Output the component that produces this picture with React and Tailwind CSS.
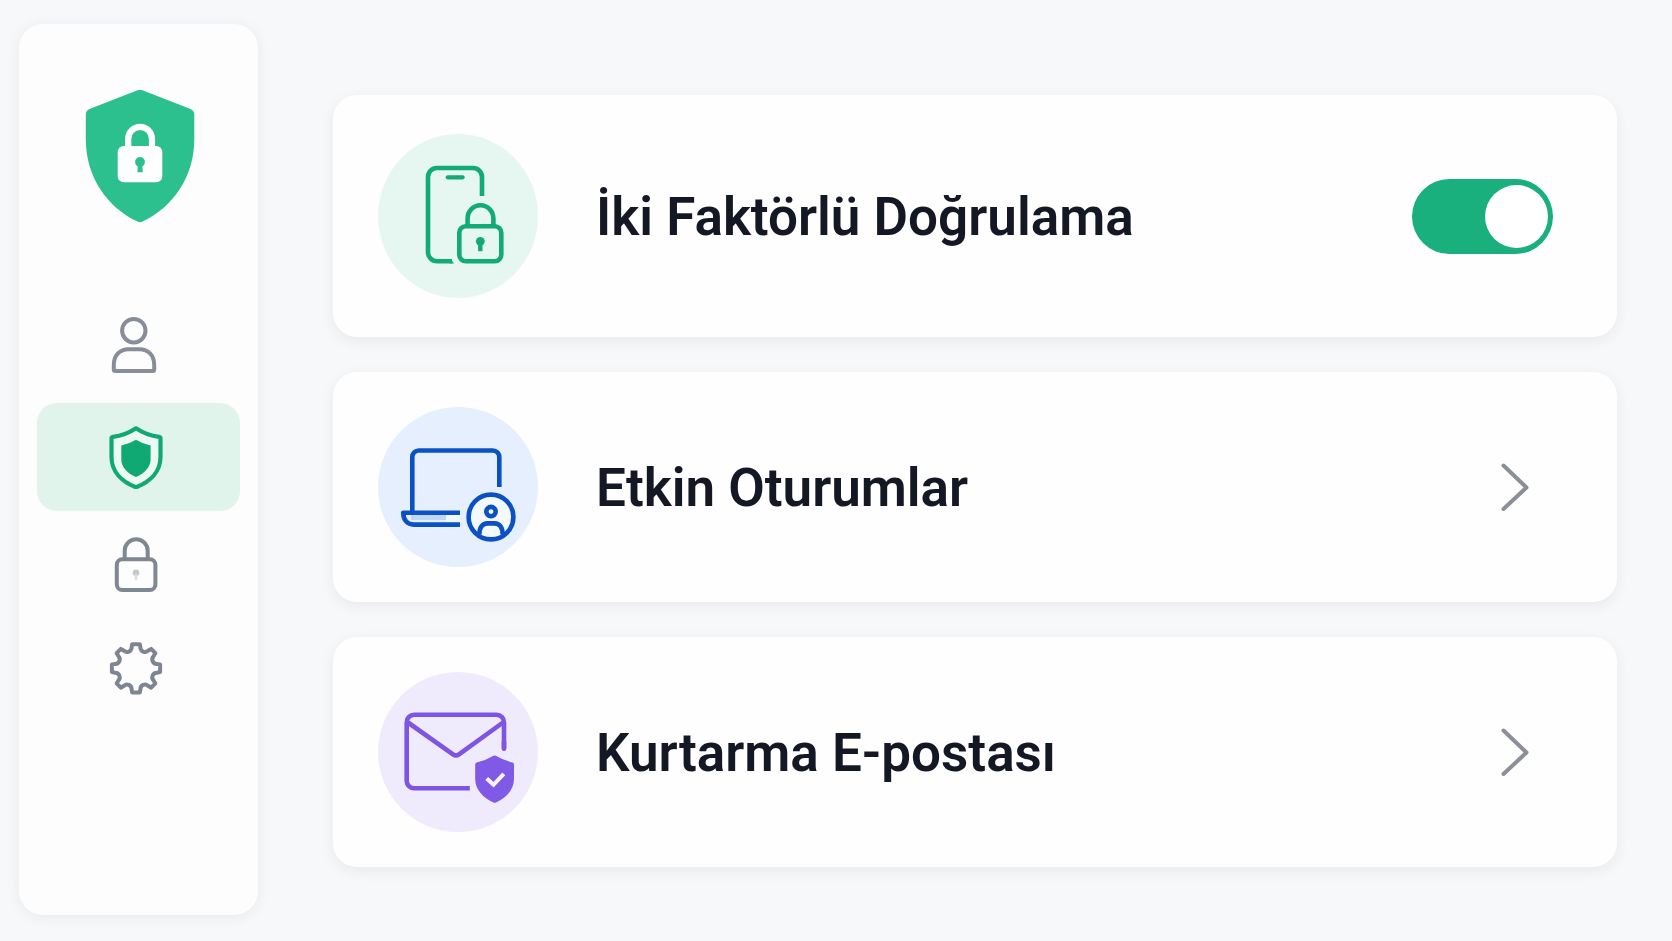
import React, { useState } from "react";

const polar = (radius, degrees) => {
  const a = ((degrees - 90) * Math.PI) / 180;
  return `${(30 + radius * Math.cos(a)).toFixed(2)} ${(31.3 + radius * Math.sin(a)).toFixed(2)}`;
};

// Eight teeth: the ones on the axes are wider than the ones on the diagonals.
const wideTooth = { tip: 9, base: 12, radius: 24.4, foot: 21.2 };
const slimTooth = { tip: 7, base: 10.5, radius: 24.6, foot: 21.2 };

const gearPath =
  Array.from({ length: 8 }, (_, i) => {
    const t = i * 45;
    const tooth = i % 2 ? slimTooth : wideTooth;
    const next = i % 2 ? wideTooth : slimTooth;
    return [
      i === 0 ? `M${polar(tooth.foot, t - tooth.base)}` : "",
      `L${polar(tooth.radius, t - tooth.tip)}`,
      `L${polar(tooth.radius, t + tooth.tip)}`,
      `L${polar(tooth.foot, t + tooth.base)}`,
      `C${polar(17.4, t + tooth.base + 3)} ${polar(17.4, t + 42 - next.base)} ${polar(next.foot, t + 45 - next.base)}`,
    ].join(" ");
  }).join(" ") + "Z";

function LogoShield() {
  return (
    <svg viewBox="0 0 110 134" className="h-[134px] w-[110px]" aria-hidden="true">
      <path
        d="M52.5 1.2Q55 .1 57.500 1.200L105.500 20Q109.300 21.500 109.300 25.500V50C109.300 88 88 118 57.500 132.600Q55 133.700 52.500 132.600C22 118 .8 88 .8 50V25.500Q.8 21.500 4.500 20Z"
        fill="#2cc08f"
      />
      <path d="M43.200 60V50a11.900 12.200 0 0 1 23.800 0v10" fill="none" stroke="#fff" strokeWidth="6.200" />
      <rect x="32.700" y="57" width="44.600" height="36.200" rx="6" fill="#fff" />
      <circle cx="55" cy="73" r="4.900" fill="#2cc08f" />
      <path d="M52.900 75h4.300l.6 8.200h-5.400z" fill="#2cc08f" />
    </svg>
  );
}

function UserIcon() {
  return (
    <svg viewBox="0 0 60 64" className="h-16 w-15" fill="none" stroke="#888d98" strokeWidth="4" strokeLinejoin="round" aria-hidden="true">
      <circle cx="27.800" cy="17.700" r="11.700" />
      <path d="M7.800 56.500V52C7.800 42 14 36.300 22.500 36.300H33.500C42 36.300 48.200 42 48.200 52V56.500Q48.200 58 46.700 58H9.300Q7.800 58 7.800 56.500Z" />
    </svg>
  );
}

function SecurityIcon() {
  return (
    <svg viewBox="0 0 60 64" className="h-16 w-15" aria-hidden="true">
      <path
        d="M30 3.300C37 8 45 11 53 11.800Q54.500 12 54.500 13.500V32C54.500 46 45 56.500 30 62.300C15 56.500 5.500 46 5.500 32V13.500Q5.500 12 7 11.800C15 11 23 8 30 3.300Z"
        fill="#ecf9f4"
        stroke="#10a974"
        strokeWidth="4.200"
        strokeLinejoin="round"
      />
      <path d="M30 14.700Q37 19 44.600 20.500V34C44.600 42 39 48 30 52C21 48 15.300 42 15.300 34V20.500Q23 19 30 14.700Z" fill="#10a974" />
    </svg>
  );
}

function LockIcon() {
  return (
    <svg viewBox="0 0 60 64" className="h-16 w-15" fill="none" stroke="#7f8793" strokeWidth="4" aria-hidden="true">
      <path d="M18.700 26V17.800a11.500 11.500 0 0 1 23 0V26" />
      <rect x="10.800" y="26.300" width="38.600" height="30.700" rx="5.500" />
      <circle cx="30" cy="39.700" r="3.300" fill="#c6c8cc" stroke="none" />
      <path d="M30 42v4" stroke="#dcdde0" strokeWidth="2.500" strokeLinecap="round" />
    </svg>
  );
}

function GearIcon() {
  return (
    <svg viewBox="0 0 60 64" className="h-16 w-15" fill="none" stroke="#7f8492" strokeWidth="4" strokeLinejoin="round" aria-hidden="true">
      <path d={gearPath} />
    </svg>
  );
}

function PhoneLockIcon() {
  return (
    <svg viewBox="0 0 160 160" className="size-40" fill="none" stroke="#12aa76" strokeWidth="4.600" aria-hidden="true">
      <path d="M104 60V41a9 9 0 0 0-9-9H59a9 9 0 0 0-9 9V116.300a9 9 0 0 0 9 9H74" />
      <path d="M72.500 122.800L76 127.600H72Z" fill="#12aa76" stroke="none" />
      <path d="M69.800 41.300H84.600" strokeWidth="4.200" strokeLinecap="round" />
      <path d="M89.600 90V82.500a12.900 13.200 0 0 1 25.800 0V90" />
      <rect x="81.300" y="90.300" width="42" height="35" rx="6.500" />
      <circle cx="102.300" cy="105.300" r="4.400" fill="#12aa76" stroke="none" />
      <path d="M102.300 106v9.200" strokeWidth="4.400" />
    </svg>
  );
}

function LaptopUserIcon() {
  return (
    <svg viewBox="0 0 160 160" className="size-40" fill="none" stroke="#0b51c4" strokeWidth="4.600" aria-hidden="true">
      <rect x="33" y="107.500" width="35" height="5.500" fill="#bdd6fa" stroke="none" />
      <rect x="68" y="107.500" width="14" height="7.500" fill="#f1f7ff" stroke="none" />
      <path d="M34.300 105V50a6.500 6.500 0 0 1 6.500-6.500H114.800a6.500 6.500 0 0 1 6.500 6.500V80" />
      <path d="M82 105.800H25.200C25.500 112.800 29 117.600 36 117.600H82" strokeLinejoin="round" />
      <circle cx="113" cy="110" r="22.400" fill="#f4f9ff" />
      <circle cx="113" cy="104.600" r="4.700" />
      <path d="M101.500 127.500C101 120.500 104.500 116.400 109.500 116.400H116.500C121.500 116.400 125 120.500 124.500 127.500" />
    </svg>
  );
}

function MailShieldIcon() {
  return (
    <svg viewBox="0 0 160 160" className="size-40" fill="none" stroke="#7c55e4" strokeWidth="4.600" aria-hidden="true">
      <path d="M91.800 116.200H36.200a7.500 7.500 0 0 1-7.500-7.500V50.200a7.500 7.500 0 0 1 7.500-7.500H118.500a7.500 7.500 0 0 1 7.500 7.500V76.700" />
      <path d="M126 70V76.700" strokeLinecap="round" />
      <path d="M30 50.500L75 82.300Q78 84.400 81 82.300L125 50.500" strokeLinejoin="round" />
      <path
        d="M115.500 83.700Q116.700 83.100 117.900 83.700Q126 88.500 134.500 90.500Q136 91 136 92.500V107C136 117.500 128.500 125.500 118 130.500Q116.700 131.100 115.400 130.500C104.900 125.500 97.200 117.500 97.200 107V92.500Q97.200 91 98.700 90.500Q107.500 88.500 115.500 83.700Z"
        fill="#8059e6"
        stroke="none"
      />
      <path d="M108.700 106.500L115.500 112.800L125.800 101.800" stroke="#f7f3ff" strokeWidth="4" />
    </svg>
  );
}

function Chevron() {
  return (
    <svg viewBox="0 0 28 48" className="mr-[88px] h-12 w-7 shrink-0" fill="none" stroke="#8b8f97" strokeWidth="4" strokeLinecap="round" strokeLinejoin="round" aria-hidden="true">
      <path d="M2.500 2.500L25.500 24.500L2.500 46" />
    </svg>
  );
}

const navItems = [
  { label: "Profil", Icon: UserIcon, size: "h-[100px]" },
  { label: "Güvenlik", Icon: SecurityIcon, size: "h-[108px]", active: true },
  { label: "Gizlilik", Icon: LockIcon, size: "h-[92px]" },
  { label: "Ayarlar", Icon: GearIcon, size: "h-[100px]" },
];

const cardClass =
  "flex items-center gap-[58px] rounded-3xl bg-[#fefefe] pl-[45px] shadow-[0_4px_14px_rgba(30,41,59,0.07)]";
const titleClass = "min-w-0 flex-1 pt-[2px] text-[53px] leading-[64px] font-semibold text-[#141824]";

export default function App() {
  const [twoFactor, setTwoFactor] = useState(true);

  return (
    <div className="flex min-h-screen bg-[#f7f8fa] font-['Roboto',sans-serif]">
      <aside className="mt-6 mb-[26px] ml-[19px] flex w-[239px] shrink-0 flex-col items-center rounded-3xl bg-[#fdfdfd] px-[18px] shadow-[0_2px_14px_rgba(30,41,59,0.07)]">
        <a href="#home" aria-label="Ana sayfa" className="mt-[65px] ml-[2px]">
          <LogoShield />
        </a>
        <nav className="mt-[72px] flex w-full flex-col gap-2">
          {navItems.map(({ label, Icon, size, active }) => (
            <a
              key={label}
              href={`#${label}`}
              aria-label={label}
              aria-current={active ? "page" : undefined}
              className={`flex items-center justify-center rounded-[20px] pr-[6px] ${size} ${active ? "bg-[#e1f4ec]" : ""}`}
            >
              <Icon />
            </a>
          ))}
        </nav>
      </aside>

      <main className="flex min-w-0 flex-1 flex-col gap-[35px] pt-[95px] pr-[55px] pb-[74px] pl-[75px]">
        <section className={`${cardClass} py-[39px]`}>
          <div className="flex h-41 w-40 shrink-0 items-center justify-center rounded-[50%] bg-[#e5f7f0]">
            <PhoneLockIcon />
          </div>
          <label htmlFor="two-factor" className={titleClass}>
            İki Faktörlü Doğrulama
          </label>
          <input
            id="two-factor"
            type="checkbox"
            role="switch"
            checked={twoFactor}
            onChange={(e) => setTwoFactor(e.target.checked)}
            className="mr-16 flex h-[75px] w-[141px] shrink-0 cursor-pointer appearance-none items-center rounded-full bg-[#cbd0d8] px-[5px] before:size-[63px] before:rounded-full before:bg-white checked:justify-end checked:bg-[#19b07d]"
          />
        </section>

        <a href="#sessions" className={`${cardClass} py-[35px]`}>
          <span className="flex size-40 shrink-0 items-center justify-center rounded-full bg-[#e6effd]">
            <LaptopUserIcon />
          </span>
          <span className={titleClass}>Etkin Oturumlar</span>
          <Chevron />
        </a>

        <a href="#recovery" className={`${cardClass} py-[35px]`}>
          <span className="flex size-40 shrink-0 items-center justify-center rounded-full bg-[#efebfd]">
            <MailShieldIcon />
          </span>
          <span className={titleClass}>Kurtarma E-postası</span>
          <Chevron />
        </a>
      </main>
    </div>
  );
}
